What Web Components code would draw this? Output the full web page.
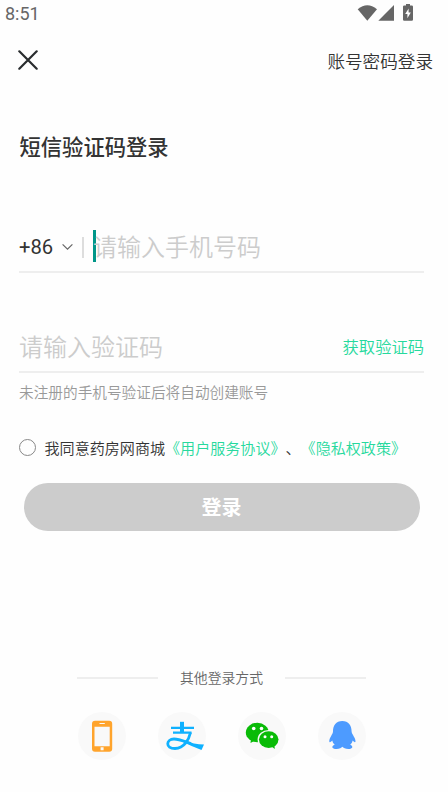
<!DOCTYPE html>
<html lang="zh-CN">
<head>
<meta charset="utf-8">
<title>短信验证码登录</title>
<style>
body{margin:0;background:#fefefe;color:#333;font-family:Roboto,"Noto Sans CJK SC",sans-serif;overflow:hidden;text-spacing-trim:space-all}
</style>
</head>
<body>
<login-page></login-page>
<script>
const define = (name, html) => {
  const t = document.createElement('template');
  t.innerHTML = html;
  customElements.define(name, class extends HTMLElement {
    constructor() {
      super();
      this.attachShadow({mode: 'open'}).append(t.content.cloneNode(true));
    }
  });
};

define('status-bar', `
<style>
:host{display:flex;justify-content:space-between;height:28px;padding:0 34px 0 5px;color:#666}
span{font-size:18px;line-height:28px}
svg{display:block}
</style>
<span>8:51</span>
<svg width="57" height="28" viewBox="357 0 57 28" fill="#666">
<path d="M357.7 9.2Q367.3 1.2 377 9.2L367.3 20.8Z"/>
<path d="M394 5V20.8H378.3Z"/>
<path fill-rule="evenodd" d="M404.2 5.600H406V4h4v1.600h1.800q1.200 0 1.200 1.200V19.600q0 1.200-1.200 1.200h-7.600q-1.200 0-1.200-1.200V6.800q0-1.200 1.200-1.200ZM408.600 8.400L405.200 14h2.200v4.300l3.400-5.700h-2.200Z"/>
</svg>`);

define('nav-bar', `
<style>
:host{display:flex;justify-content:space-between;align-items:center;height:64px;padding:0 15px 0 18px}
svg{display:block}
span{font-size:17.600px;line-height:26px;padding-top:4px;font-weight:350}
</style>
<svg width="20" height="20" viewBox="0 0 20 20" fill="none" stroke="#292c2e" stroke-width="2.200" stroke-linecap="round"><path d="M1.300 1.300L18.700 18.700M18.700 1.300L1.300 18.700"/></svg>
<span><slot></slot></span>`);

define('form-field', `
<style>
:host{display:flex;align-items:center;height:50px;box-sizing:border-box;border-bottom:2px solid #eee}
.hint{font-size:24px;line-height:36px;padding-top:2px;color:#ccc;flex:1;white-space:nowrap;font-weight:350}
</style>
<slot name="before"></slot><span class="hint"><slot></slot></span><slot name="after"></slot>`);

define('country-code', `
<style>
:host{display:flex;align-items:center;width:74px;height:36px;flex:none;font:400 20.200px Roboto,sans-serif}
span{width:43px;line-height:36px}
svg{display:block}
i{width:1.500px;height:21px;background:#ddd;margin-left:9px}
b{width:3px;height:32px;background:#009688;margin:-2px -3px 0 auto}
</style>
<span><slot></slot></span>
<svg width="11" height="8" viewBox="0 0 11 8" fill="none" stroke="#666" stroke-width="1.200"><path d="M.6 1.300L5.500 6.200L10.400 1.300"/></svg>
<i></i><b></b>`);

define('agree-row', `
<style>
:host{display:flex;align-items:center;height:24px;font-size:15.070px;white-space:nowrap;font-weight:350}
i{box-sizing:border-box;width:17px;height:17px;border:1px solid #888;border-radius:50%;margin-right:8.500px;flex:none}
a{color:#26d99d}
</style>
<i></i><span>我同意药房网商城<a>《用户服务协议》</a>、<a>《隐私权政策》</a></span>`);

define('submit-button', `
<style>
:host{display:block;height:48px;border-radius:24px;background:#ccc;color:#fff;font-size:20px;line-height:50px;font-weight:700;text-align:center}
</style><slot></slot>`);

define('section-divider', `
<style>
:host{display:flex;align-items:center;justify-content:space-between;width:289px;height:22px;font-size:13.850px;line-height:22px;color:#666;font-weight:350}
i{width:81px;height:2px;background:#eee}
</style><i></i><span><slot></slot></span><i></i>`);

define('social-button', `
<style>
:host{display:block;width:48px;height:48px;border-radius:50%;background:#f9f9f9}
</style><slot></slot>`);

define('login-page', `
<style>
:host{display:block;height:792px;width:448px}
main{padding:0 24px 0 19px}
h1{margin:40px 0 0;padding-left:.5px;font-size:21.300px;line-height:32px;font-weight:500}
.phone{margin-top:59px}
.code{margin-top:50px}
.get{font-size:16.300px;color:#26d99d;line-height:24px;padding-top:2px;font-weight:350}
p{margin:9px 0 0;font-size:14.670px;line-height:22px;color:#999;font-weight:350}
agree-row{margin-top:31px}
submit-button{margin:24px 4.500px 0 4.500px}
section-divider{margin:136px 0 0 58px}
.social{display:flex;gap:32px;margin:23px 0 0 58.500px}
svg{display:block}
</style>
<status-bar></status-bar>
<nav-bar>账号密码登录</nav-bar>
<main>
<h1>短信验证码登录</h1>
<form-field class="phone"><country-code slot="before">+86</country-code>请输入手机号码</form-field>
<form-field class="code">请输入验证码<span class="get" slot="after">获取验证码</span></form-field>
<p>未注册的手机号验证后将自动创建账号</p>
<agree-row></agree-row>
<submit-button>登录</submit-button>
<section-divider>其他登录方式</section-divider>
<div class="social">
<social-button><svg width="48" height="48" viewBox="0 0 48 48"><path fill="#ffa42c" fill-rule="evenodd" d="M17 8.700H31.200Q34.200 8.700 34.200 11.700V36.700Q34.200 39.700 31.200 39.700H17Q14 39.700 14 36.700V11.700Q14 8.700 17 8.700ZM16.500 14.700V34.200H31.700V14.700ZM21.500 10.900V12H26.800V10.900ZM22.600 35.300V38.300H25.600V35.300Z"/></svg></social-button>
<social-button><svg width="48" height="48" viewBox="0 0 48 48" fill="none" stroke="#0fb1ff"><path stroke-width="2.200" d="M13 15.900H36M15 20.700H33.500"/><path stroke-width="4" d="M24 9.800V21"/><path stroke-width="2.800" d="M32.500 20.500C31 27 26.500 36.500 17 36.500C7 36.500 8 27 16 27C22 27 27 29.800 33 31.600"/><path fill="#0fb1ff" stroke="none" d="M26 28Q36 32.500 46 32.500L43.500 38Q34 34.500 25 30Z"/></svg></social-button>
<social-button><svg width="48" height="48" viewBox="0 0 48 48"><g fill="#09bb07"><ellipse cx="19.300" cy="20.500" rx="11.500" ry="9.700"/><path d="M13 27L12.500 31L18 28Z"/></g><ellipse cx="30.600" cy="27.500" rx="11" ry="9.500" fill="#f9f9f9"/><g fill="#09bb07"><ellipse cx="30.700" cy="27.600" rx="9.800" ry="8.300"/><path d="M33 34L36.800 36.900L36.300 32Z"/></g><g fill="#fff"><circle cx="15.700" cy="16.500" r="1.800"/><circle cx="23.500" cy="16.500" r="1.800"/><circle cx="27" cy="24.800" r="1.500"/><circle cx="33.700" cy="24.800" r="1.500"/></g></svg></social-button>
<social-button><svg width="48" height="48" viewBox="0 0 48 48"><path fill="#4d9bff" d="M24.300 9C18 9 15 13.500 15 19.500C15 22 11 26 11.300 29.500C11.500 31 13.500 29.500 14.300 28.500C14.600 30.500 15.500 31.500 16.700 32.700C13 34 13.700 37 18.500 37C21.500 37 23.500 36 24.300 34.800C25.300 36 27.500 37 30.300 37C35 37 35.500 34 32.200 32.700C33.500 31.500 34.300 30.500 34.600 28.500C35.500 29.500 37.300 31 37.500 29.500C37.800 26 33.600 22 33.600 19.500C33.600 13.500 30.500 9 24.300 9Z"/></svg></social-button>
</div>
</main>`);
</script>
</body>
</html>
